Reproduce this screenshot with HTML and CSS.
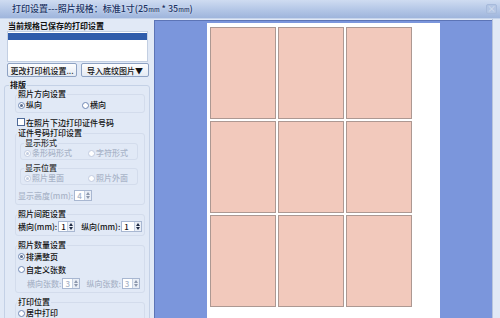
FILE: index.html
```html
<!DOCTYPE html>
<html lang="zh">
<head>
<meta charset="UTF-8" />
<title>打印设置</title>
<link rel="stylesheet" href="styles.css">
</head>
<body>
<div class="window">
  <div class="titlebar">
    <span class="title">打印设置---照片规格：标准1寸(25<small>mm</small> * 35<small>mm</small>)</span>
    <span class="close">×</span>
  </div>

  <div class="main">
    <div class="sidebar">
      <div class="saved-label">当前规格已保存的打印设置</div>
      <div class="listbox"><div class="list-sel"></div></div>
      <div class="btnrow">
        <button class="btn btn-printer">更改打印机设置...</button>
        <button class="btn btn-bg">导入底纹图片▼</button>
      </div>

      <fieldset class="layout">
        <legend>排版</legend>

        <fieldset class="group first">
          <legend>照片方向设置</legend>
          <div class="row">
            <label class="radio checked w64"><i></i>纵向</label>
            <label class="radio"><i></i>横向</label>
          </div>
        </fieldset>

        <label class="check"><i></i>在照片下边打印证件号码</label>

        <fieldset class="group idcode">
          <legend>证件号码打印设置</legend>
          <fieldset class="subgroup">
            <legend>显示形式</legend>
            <div class="row">
              <label class="radio checked disabled w64"><i></i>条形码形式</label>
              <label class="radio disabled"><i></i>字符形式</label>
            </div>
          </fieldset>
          <fieldset class="subgroup">
            <legend>显示位置</legend>
            <div class="row">
              <label class="radio checked disabled w64"><i></i>照片里面</label>
              <label class="radio disabled"><i></i>照片外面</label>
            </div>
          </fieldset>
          <div class="row spinrow">
            <span class="off">显示高度(mm):</span>
            <span class="spin off narrow"><span class="spin-val">4</span><span class="spin-btn"><i class="up"></i><i class="down"></i></span></span>
          </div>
        </fieldset>

        <fieldset class="group">
          <legend>照片间距设置</legend>
          <div class="row spinrow">
            <span>横向(mm):</span>
            <span class="spin"><span class="spin-val">1</span><span class="spin-btn"><i class="up"></i><i class="down"></i></span></span>
            <span class="gap">纵向(mm):</span>
            <span class="spin wide"><span class="spin-val">1</span><span class="spin-btn"><i class="up"></i><i class="down"></i></span></span>
          </div>
        </fieldset>

        <fieldset class="group count">
          <legend>照片数量设置</legend>
          <div class="row"><label class="radio checked"><i></i>排满整页</label></div>
          <div class="row"><label class="radio"><i></i>自定义张数</label></div>
          <div class="row spinrow indent">
            <span class="off">横向张数:</span>
            <span class="spin off narrow"><span class="spin-val">3</span><span class="spin-btn"><i class="up"></i><i class="down"></i></span></span>
            <span class="off gap">纵向张数:</span>
            <span class="spin off narrow"><span class="spin-val">3</span><span class="spin-btn"><i class="up"></i><i class="down"></i></span></span>
          </div>
        </fieldset>

        <fieldset class="group">
          <legend>打印位置</legend>
          <div class="row"><label class="radio"><i></i>居中打印</label></div>
        </fieldset>
      </fieldset>
    </div>

    <div class="preview">
      <div class="page">
        <div class="photos">
          <div class="photo"></div><div class="photo"></div><div class="photo"></div>
          <div class="photo"></div><div class="photo"></div><div class="photo"></div>
          <div class="photo"></div><div class="photo"></div><div class="photo"></div>
        </div>
      </div>
    </div>
    <div class="rightedge"></div>
  </div>
</div>
</body>
</html>
```

FILE: styles.css
```css
* {
  box-sizing: border-box;
}
body {
  margin: 0;
  width: 500px;
  height: 318px;
  overflow: hidden;
  font-family: "Noto Sans CJK SC", "Noto Sans", sans-serif;
  font-size: 8px;
  font-weight: 500;
  color: #111;
  white-space: nowrap;
}
.window {
  height: 318px;
  display: flex;
  flex-direction: column;
  background: #e1e9f6;
}
.titlebar {
  height: 19px;
  flex: none;
  display: flex;
  align-items: center;
  justify-content: space-between;
  padding: 0 3px 0 12px;
  background: linear-gradient(#cfdcf1, #b3c6e6 55%, #9fb5dc);
  border-bottom: 1px solid #c6d4eb;
}
.title {
  color: #1a3263;
  font-size: 9px;
  line-height: 11px;
  text-shadow: 0 0 2px #e8f0fc;
}
.title small {
  font-size: 6px;
}
.close {
  width: 11px;
  height: 10px;
  line-height: 8px;
  text-align: center;
  color: #d2dcee;
  font-size: 9px;
  border: 1px solid #a7badb;
  border-radius: 2px;
  background: #b4c6e4;
}
.main {
  flex: 1;
  display: flex;
  min-height: 0;
}

/* left settings column */
.sidebar {
  width: 154px;
  flex: none;
  padding-top: 2px;
  overflow: hidden;
}
.saved-label {
  font-weight: bold;
  line-height: 10px;
  margin-left: 8px;
}
.listbox {
  margin: 0 6px 0 7px;
  height: 31px;
  background: #fff;
  border: 1px solid #c3cfe2;
  padding: 1px 0 0;
}
.list-sel {
  height: 7px;
  background: #2f5cab;
}
.btnrow {
  display: flex;
  gap: 4px;
  margin: 1px 0 0 7px;
}
.btn {
  height: 14px;
  padding: 0;
  font: inherit;
  color: #111;
  background: linear-gradient(#fdfdfe, #e4eaf3);
  border: 1px solid #8ea2c3;
  border-radius: 2px;
}
.btn-printer {
  width: 70px;
}
.btn-bg {
  width: 68px;
}
fieldset {
  margin: 0;
  min-width: 0;
  border: 1px solid #c4d1e6;
  border-radius: 3px;
}
legend {
  line-height: 10px;
  padding: 0 1px;
}
.layout {
  margin: 3px 4px 0 4px;
  padding: 0 4px 6px 10px;
}
.layout > legend {
  font-weight: bold;
  margin-left: -6px;
}
.group {
  margin-top: 4px;
  padding: 0 2px 1px 2px;
  border-color: #d3dcec;
}
.group.first {
  margin-top: -1px;
}
.group.idcode {
  margin-top: 0;
}
.group > legend {
  margin-left: -1px;
}
.subgroup {
  margin: 0 4px 3px 2px;
  padding: 0 3px 1px 3px;
  border-color: #d3dcec;
}
.subgroup > legend {
  color: #333;
}
.row {
  display: flex;
  align-items: center;
  height: 12px;
  line-height: 12px;
}
.subgroup .row {
  height: 10px;
}
.count .row {
  height: 13px;
}
.w64 {
  width: 64px;
}
.indent {
  padding-left: 9px;
}
.off,
.disabled {
  color: #a9b4c8;
}
.radio,
.check {
  display: flex;
  align-items: center;
}
.radio i {
  width: 7px;
  height: 7px;
  margin-right: 1px;
  border: 1px solid #7088b4;
  border-radius: 50%;
  background: #fff;
  display: flex;
  align-items: center;
  justify-content: center;
}
.radio.checked i::after {
  content: "";
  width: 3px;
  height: 3px;
  border-radius: 50%;
  background: #5c6d8d;
}
.radio.disabled i {
  border-color: #c2cce0;
}
.radio.disabled.checked i::after {
  background: #c2cce0;
}
.check {
  margin: 3px 0 0 2px;
  height: 12px;
}
.check i {
  width: 8px;
  height: 8px;
  margin-right: 1px;
  border: 1px solid #4f6a98;
  background: #fff;
}
.spinrow,
.count .spinrow {
  height: 15px;
}
.gap {
  margin-left: 6px;
}
.spin {
  display: inline-flex;
  align-items: stretch;
  width: 22px;
  height: 11px;
  margin-left: 1px;
  border: 1px solid #a8b7d1;
  background: #fff;
}
.spin.narrow {
  width: 18px;
}
.spin.wide {
  width: 27px;
}
.spin-val {
  flex: 1;
  line-height: 9px;
  padding-left: 2px;
  color: #111;
}
.spin.off .spin-val {
  color: #a9b4c8;
}
.spin-btn {
  width: 7px;
  display: flex;
  flex-direction: column;
  justify-content: center;
  align-items: center;
  gap: 1px;
  background: #e9eef6;
  border-left: 1px solid #c5d0e2;
}
.spin-btn i {
  width: 0;
  height: 0;
  border-left: 2px solid transparent;
  border-right: 2px solid transparent;
}
.spin-btn .up {
  border-bottom: 3px solid #1f2b44;
}
.spin-btn .down {
  border-top: 3px solid #1f2b44;
}
.spin.off .spin-btn .up {
  border-bottom-color: #8d98ad;
}
.spin.off .spin-btn .down {
  border-top-color: #8d98ad;
}

/* preview of the print page */
.preview {
  width: 338px;
  flex: none;
  margin-top: 1px;
  padding: 2px 0 0 52px;
  background: #7b96dc;
  border-top: 1px solid #5c74b6;
  border-left: 1px solid #5c74b6;
  overflow: hidden;
}
.page {
  width: 233px;
  height: 320px;
  background: #fff;
  padding: 4px 3px;
}
.photos {
  display: grid;
  grid-template-columns: repeat(3, 66px);
  grid-auto-rows: 92px;
  gap: 2px;
}
.photo {
  background: #f2c9bc;
  border: 1px solid #ad9892;
}
.rightedge {
  flex: 1;
  border-left: 1px solid #b8c5dd;
}
```
